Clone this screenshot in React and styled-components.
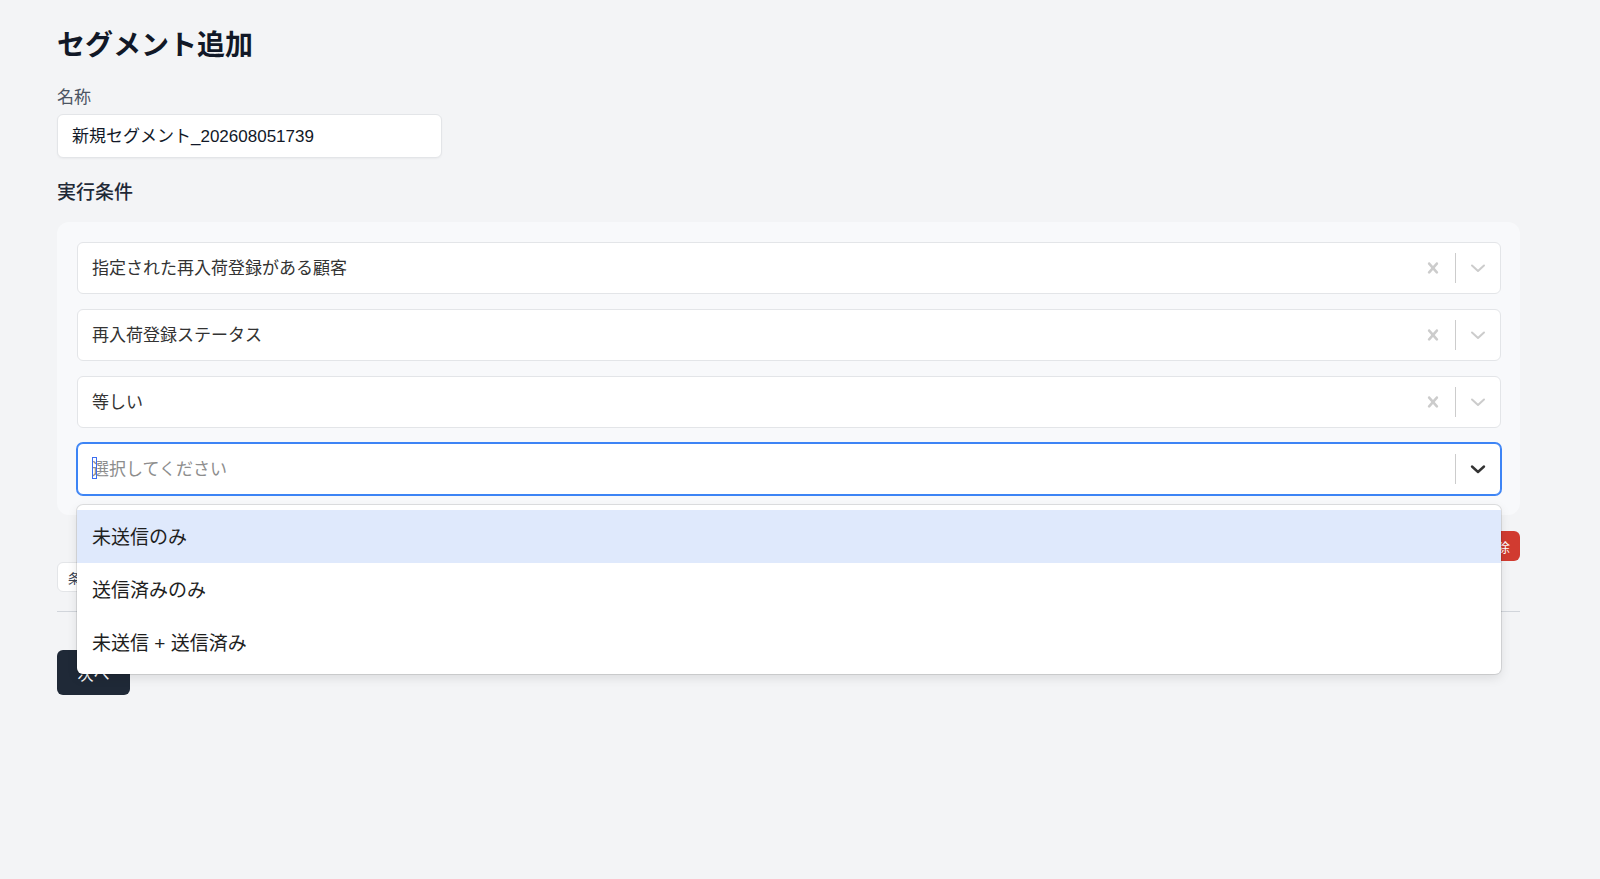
import React from "react";
import styled, { createGlobalStyle } from "styled-components";

const GlobalStyle = createGlobalStyle`
  html, body {
    margin: 0;
    background: #f3f4f6;
    font-family: "Liberation Sans", "Noto Sans CJK JP", sans-serif;
    color: #111827;
  }
  #root {
    min-height: 100vh;
  }
`;

const conditions = [
  "指定された再入荷登録がある顧客",
  "再入荷登録ステータス",
  "等しい",
];

const options = ["未送信のみ", "送信済みのみ", "未送信 + 送信済み"];

const CrossIcon = () => (
  <svg width="22" height="22" viewBox="0 0 20 20" fill="currentColor" aria-hidden="true">
    <path d="M14.348 14.849c-0.469 0.469-1.229 0.469-1.697 0l-2.651-3.030-2.651 3.029c-0.469 0.469-1.229 0.469-1.697 0-0.469-0.469-0.469-1.229 0-1.697l2.758-3.15-2.759-3.152c-0.469-0.469-0.469-1.228 0-1.697s1.228-0.469 1.697 0l2.652 3.031 2.651-3.031c0.469-0.469 1.228-0.469 1.697 0s0.469 1.229 0 1.697l-2.758 3.152 2.758 3.15c0.469 0.469 0.469 1.229 0 1.698z" />
  </svg>
);

const ChevronIcon = ({ bold }) => (
  <svg width="22" height="22" viewBox="0 0 22 22" fill="none" aria-hidden="true">
    <polyline
      points="5,8.5 11,14 17,8.5"
      stroke="currentColor"
      strokeWidth={bold ? 2.4 : 2}
      strokeLinecap="round"
      strokeLinejoin="round"
    />
  </svg>
);

const ConditionSelect = ({ value, focused, menuOpen }) => (
  <SelectBox>
    <Control $focused={focused}>
      <ValueArea $placeholder={!value}>
        {focused && <Caret />}
        {value || "選択してください"}
      </ValueArea>
      {value && (
        <Indicator>
          <CrossIcon />
        </Indicator>
      )}
      <Separator />
      <Indicator $dark={focused}>
        <ChevronIcon bold={focused} />
      </Indicator>
    </Control>
    {menuOpen && (
      <Menu>
        {options.map((o, i) => (
          <Option key={o} $active={i === 0}>
            {o}
          </Option>
        ))}
      </Menu>
    )}
  </SelectBox>
);

const App = () => {
  return (
    <>
      <GlobalStyle />
      <Page>
        <Title>セグメント追加</Title>

        <Field>
          <Label>名称</Label>
          <TextInput defaultValue="新規セグメント_202608051739" readOnly />
        </Field>

        <SectionTitle>実行条件</SectionTitle>
        <ConditionPanel>
          {conditions.map((c) => (
            <ConditionSelect key={c} value={c} />
          ))}
          <ConditionSelect focused menuOpen />
        </ConditionPanel>

        <GroupActions>
          <DangerButton>削除</DangerButton>
        </GroupActions>
        <AddButton>条件を追加</AddButton>

        <Divider />

        <PrimaryButton>次へ</PrimaryButton>
      </Page>
    </>
  );
};

const Page = styled.main`
  padding: 28px 80px 40px 57px;
  display: flex;
  flex-direction: column;
  align-items: stretch;
`;

const Title = styled.h1`
  margin: 0;
  font-size: 28px;
  line-height: 36px;
  font-weight: 700;
  color: #111827;
`;

const Field = styled.div`
  margin-top: 22px;
`;

const Label = styled.label`
  display: block;
  font-size: 17px;
  line-height: 24px;
  color: #4b5563;
  margin-bottom: 4px;
`;

const TextInput = styled.input`
  box-sizing: border-box;
  width: 385px;
  height: 44px;
  padding: 0 14px 3px;
  border: 1px solid #e3e5e8;
  border-radius: 6px;
  background: #fff;
  font-family: inherit;
  font-size: 17px;
  color: #111827;
  box-shadow: 0 1px 2px rgba(0, 0, 0, 0.04);
  outline: none;
`;

const SectionTitle = styled.h2`
  margin: 21px 0 0;
  font-size: 19px;
  line-height: 28px;
  font-weight: 500;
  color: #1f2937;
`;

const ConditionPanel = styled.div`
  margin-top: 15px;
  padding: 20px 19px 20px 20px;
  background: #f8f9fb;
  border-radius: 12px;
  display: flex;
  flex-direction: column;
  gap: 15px;
`;

const SelectBox = styled.div`
  position: relative;
`;

const Control = styled.div`
  box-sizing: border-box;
  height: 52px;
  display: flex;
  align-items: stretch;
  background: #fff;
  border-radius: 6px;
  border: 1px solid ${(p) => (p.$focused ? "#3d84f5" : "#e3e5e8")};
  box-shadow: ${(p) => (p.$focused ? "0 0 0 1px #3d84f5" : "none")};
`;

const ValueArea = styled.div`
  position: relative;
  flex: 1;
  display: flex;
  align-items: center;
  padding: 0 0 3px 14px;
  font-size: 17px;
  color: ${(p) => (p.$placeholder ? "#8d8d8d" : "#333")};
`;

const Caret = styled.span`
  position: absolute;
  left: 14px;
  top: 50%;
  width: 3px;
  height: 20px;
  margin-top: -12px;
  border: 1px solid #3d6ff0;
`;

const Indicator = styled.div`
  width: 44px;
  display: flex;
  align-items: center;
  justify-content: center;
  color: ${(p) => (p.$dark ? "#333" : "#cccccc")};
`;

const Separator = styled.span`
  width: 1px;
  margin: 10px 0;
  background: #cccccc;
`;

const Menu = styled.div`
  position: absolute;
  top: calc(100% + 10px);
  left: 0;
  right: 0;
  z-index: 10;
  padding: 5px 0;
  background: #fff;
  border-radius: 6px;
  box-shadow: 0 0 0 1px rgba(0, 0, 0, 0.1), 0 4px 11px rgba(0, 0, 0, 0.1);
`;

const Option = styled.div`
  height: 53px;
  display: flex;
  align-items: center;
  padding: 0 0 2px 15px;
  box-sizing: border-box;
  font-size: 19px;
  color: #1f1f1f;
  background: ${(p) => (p.$active ? "#dfe9fc" : "transparent")};
`;

const GroupActions = styled.div`
  margin-top: 16px;
  display: flex;
  justify-content: flex-end;
`;

const DangerButton = styled.button`
  height: 30px;
  padding: 0 10px;
  border: 0;
  border-radius: 6px;
  background: #d13b30;
  color: #fff;
  font-family: inherit;
  font-size: 13px;
`;

const AddButton = styled.button`
  align-self: flex-start;
  margin-top: 1px;
  height: 30px;
  padding: 0 10px;
  border: 1px solid #e3e5e8;
  border-radius: 6px;
  background: #fff;
  color: #374151;
  font-family: inherit;
  font-size: 13px;
`;

const Divider = styled.hr`
  width: 100%;
  margin: 19px 0 0;
  border: 0;
  border-top: 1px solid #d1d5db;
`;

const PrimaryButton = styled.button`
  align-self: flex-start;
  margin-top: 38px;
  width: 73px;
  height: 45px;
  border: 0;
  border-radius: 6px;
  background: #1f2937;
  color: #fff;
  font-family: inherit;
  font-size: 16px;
`;

export default App;
